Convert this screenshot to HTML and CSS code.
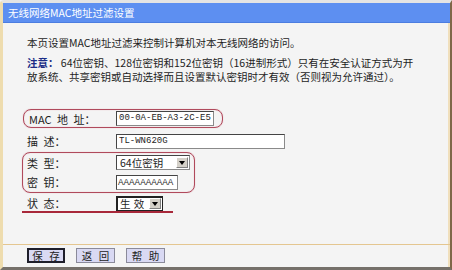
FILE: index.html
```html
<!DOCTYPE html>
<html lang="zh-CN">
<head>
  <meta charset="UTF-8">
  <title>无线网络MAC地址过滤设置</title>
  <link rel="stylesheet" href="styles.css">
</head>
<body>
  <div class="window">
    <!-- 标题栏 -->
    <div class="title">无线网络MAC地址过滤设置</div>

    <div class="content">
      <p class="intro">本页设置MAC地址过滤来控制计算机对本无线网络的访问。</p>
      <p class="note"><b>注意：</b> 64位密钥、128位密钥和152位密钥（16进制形式）只有在安全认证方式为开<br>放系统、共享密钥或自动选择而且设置默认密钥时才有效（否则视为允许通过）。</p>

      <div class="form">
        <div class="mark mark-mac">
          <div class="row">
            <span class="label label-mac">MAC 地 址：</span>
            <span class="field mac">00-0A-EB-A3-2C-E5</span>
          </div>
        </div>

        <div class="row row-desc">
          <span class="label">描 述：</span>
          <span class="field desc">TL-WN620G</span>
        </div>

        <div class="mark mark-key">
          <div class="row row-type">
            <span class="label">类 型：</span>
            <span class="select type"><span class="select-text">64位密钥</span><span class="arrow"></span></span>
          </div>
          <div class="row row-key">
            <span class="label">密 钥：</span>
            <span class="field key">AAAAAAAAAA</span>
          </div>
        </div>

        <div class="row row-status">
          <span class="label">状 态：</span>
          <span class="select status"><span class="select-text wide">生 效</span><span class="arrow"></span></span>
        </div>
      </div>
    </div>

    <!-- 底部按钮 -->
    <div class="footer">
      <button class="btn focus">保 存</button>
      <button class="btn">返 回</button>
      <button class="btn">帮 助</button>
    </div>
  </div>
</body>
</html>
```

FILE: styles.css
```css
body {
  margin: 0;
  padding: 0;
  background: #f4f4f4;
  font-family: "Noto Sans CJK SC", "Noto Sans", sans-serif;
  color: #1e1e1e;
}
.window {
  width: 452px;
  height: 270px;
  box-sizing: border-box;
  display: flex;
  flex-direction: column;
  background: #f4f4f4;
  border-top: 3px solid #e4e4e4;
  border-left: 3px solid #eedcae;
  border-right: 2px solid #7f6748;
  border-bottom: 3px solid #75706a;
  border-top-left-radius: 4px;
}
.title {
  height: 20px;
  line-height: 19px;
  box-sizing: border-box;
  padding-left: 5px;
  background: #5d8ff1;
  border-bottom: 1px solid #4c7de0;
  color: #fff;
  font-size: 10.5px;
}
.content {
  flex: 1;
  padding: 0 24px;
  box-shadow: inset -2px 0 #f0dfbc;
}
.intro, .note {
  margin: 0;
  font-size: 10.5px;
  line-height: 14px;
  white-space: nowrap;
}
.intro {
  margin-top: 13px;
}
.note {
  margin-top: 6px;
}
.note b {
  color: #1a2c86;
}
.form {
  margin-top: 25px;
}
.row {
  display: flex;
  align-items: center;
  height: 20px;
  font-size: 11px;
}
.label {
  width: 89px;
  flex-shrink: 0;
  word-spacing: 3px;
}
.mark {
  border: 1px solid #b04a5c;
  border-radius: 8px;
  margin-left: -5px;
  box-sizing: border-box;
  box-shadow: 0 0 1px #d99aa6, inset 0 0 1px #d99aa6;
}
.mark-mac {
  width: 200px;
  height: 19px;
  margin-left: -4px;
}
.mark-mac .row {
  height: 17px;
  padding-left: 5px;
}
.label-mac {
  width: 87px;
}
.row-desc {
  margin-top: 3px;
}
.mark-key {
  width: 173px;
  margin-top: 1px;
  padding-left: 4px;
}
.row-type {
  height: 19px;
}
.row-status {
  height: 16px;
  width: 146px;
  margin-top: 2px;
  margin-left: -5px;
  padding-left: 5px;
  border-bottom: 2px solid #a8283a;
}
.field {
  display: inline-block;
  height: 15px;
  box-sizing: border-box;
  padding: 0 2px;
  background: #fff;
  border: 1px solid #8a8a8a;
  border-top-color: #444;
  border-left-color: #444;
  font-family: "Liberation Mono", monospace;
  font-size: 9px;
  line-height: 13px;
}
.mac {
  width: 98px;
}
.desc {
  width: 169px;
}
.key {
  width: 62px;
  padding: 0 1px;
  font-family: "Liberation Sans", sans-serif;
  font-size: 8.3px;
}
.select {
  display: inline-flex;
  align-items: center;
  height: 15px;
  box-sizing: border-box;
  background: #fff;
  border: 1px solid #8a8a8a;
  border-top-color: #444;
  border-left-color: #444;
  font-size: 10.5px;
}
.select-text {
  flex: 1;
  padding-left: 3px;
  line-height: 13px;
  white-space: nowrap;
}
.select-text.wide {
  padding-left: 2px;
  word-spacing: 1px;
}
.type {
  width: 74px;
}
.status {
  width: 47px;
  border: 1px solid #222;
  border-top-width: 2px;
  border-left-width: 2px;
}
.arrow {
  position: relative;
  flex-shrink: 0;
  width: 12px;
  height: 11px;
  margin-right: 1px;
  box-sizing: border-box;
  background: #d4d0c8;
  border: 1px solid;
  border-color: #fff #808080 #808080 #fff;
}
.arrow::after {
  content: "";
  position: absolute;
  left: 2px;
  top: 3px;
  border-top: 4px solid #000;
  border-left: 3.5px solid transparent;
  border-right: 3.5px solid transparent;
}
.footer {
  height: 23px;
  box-sizing: border-box;
  padding: 3px 0 0 24px;
  display: flex;
  gap: 11px;
  align-items: flex-start;
  border-top: 1px solid #e4c690;
  box-shadow: inset -2px 0 #f0dfbc;
}
.btn {
  width: 39px;
  height: 15px;
  padding: 0;
  box-sizing: border-box;
  background: #d9d9f3;
  border: 1px solid #8a8a9a;
  font-family: "Noto Sans CJK SC", sans-serif;
  font-size: 10.5px;
  line-height: 13px;
  word-spacing: 4px;
  color: #1e1e1e;
}
.btn.focus {
  width: 38px;
  border: 2px solid #1e1e2a;
  line-height: 11px;
}
```
